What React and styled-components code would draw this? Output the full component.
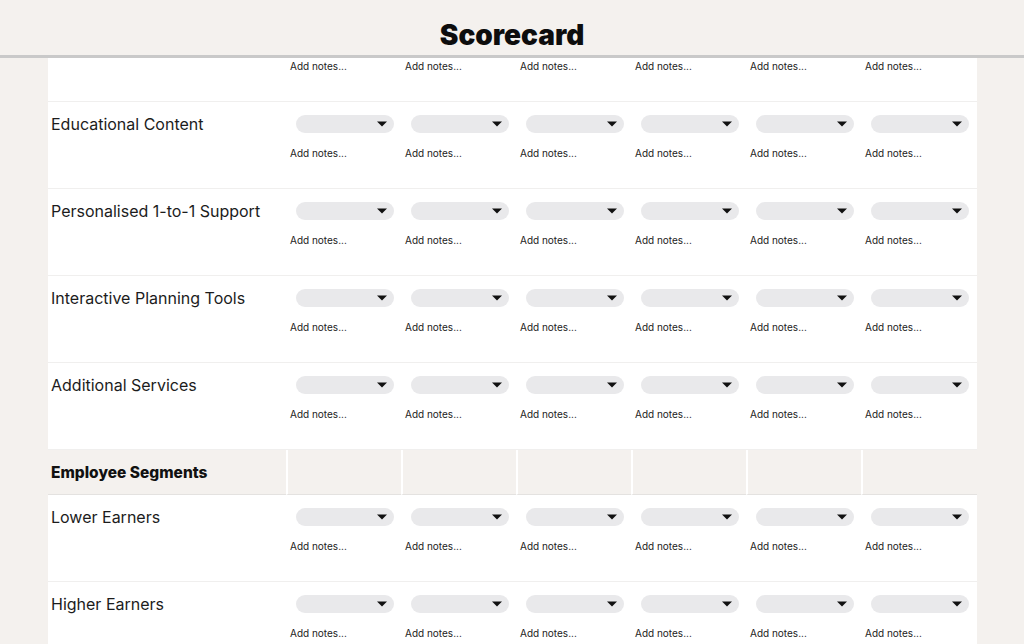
import React from "react";
import styled, { createGlobalStyle } from "styled-components";

const GlobalStyle = createGlobalStyle`
  html, body { margin: 0; padding: 0; }
  body {
    background: #f4f1ee;
    font-family: Inter, "Noto Sans", "Liberation Sans", sans-serif;
    color: #1a1a1a;
  }
`;

const Page = styled.div`
  height: 644px;
  display: flex;
  flex-direction: column;
  overflow: hidden;
`;

const Header = styled.header`
  flex: 0 0 auto;
  height: 55px;
  border-bottom: 3px solid #c9c9c9;
  background: #f4f1ee;
  display: flex;
  align-items: center;
  justify-content: center;
`;

const Title = styled.h1`
  margin: 14px 0 0;
  font-size: 28px;
  font-weight: 900;
  color: #0d0d0d;
  letter-spacing: 0;
`;

const Viewport = styled.div`
  flex: 1 1 auto;
  overflow: hidden;
`;

const Card = styled.div`
  margin: -43px 47px 0 48px;
  background: #fff;
  display: grid;
  grid-template-columns: 239px repeat(6, 115px);
`;

const Row = styled.div`
  display: contents;
`;

const LabelCell = styled.div`
  height: 74px;
  border-bottom: 1px solid #f0efee;
  padding: 12px 0 0 3px;
  font-size: 16px;
  line-height: 20px;
  color: #1c1c1c;
`;

const ScoreCell = styled.div`
  height: 74px;
  padding: 12px 0 0 3px;
  border-bottom: 1px solid #f0efee;
  display: flex;
  flex-direction: column;
  align-items: flex-start;
`;

const Select = styled.div`
  margin: 1px 0 0 6px;
  width: 98px;
  height: 18px;
  border-radius: 9px;
  background: #e9e9eb;
  display: flex;
  align-items: center;
  justify-content: flex-end;
  padding-right: 7px;
  box-sizing: border-box;
`;

const Notes = styled.div`
  margin-top: 14px;
  font-size: 10px;
  line-height: 12px;
  color: #222;
`;

const SectionLabel = styled.div`
  height: 44px;
  background: #f4f1ee;
  border-bottom: 1px solid #e4e2e0;
  padding-left: 3px;
  display: flex;
  align-items: center;
  font-size: 15.5px;
  font-weight: 800;
  color: #111;
`;

const SectionCell = styled.div`
  height: 44px;
  background: #f4f1ee;
  border-bottom: 1px solid #e4e2e0;
  border-left: 2px solid #fff;
  margin-left: -1px;
`;

const Arrow = () => (
  <svg width="10" height="6" viewBox="0 0 10 6" aria-hidden="true">
    <path d="M0 0.5 H10 L5 5.5 Z" fill="#111" />
  </svg>
);

const COLS = 6;

const ItemRow = ({ label }) => (
  <Row>
    <LabelCell>{label}</LabelCell>
    {Array.from({ length: COLS }).map((_, i) => (
      <ScoreCell key={i}>
        <Select>
          <Arrow />
        </Select>
        <Notes>Add notes...</Notes>
      </ScoreCell>
    ))}
  </Row>
);

const SectionRow = ({ label }) => (
  <Row>
    <SectionLabel>{label}</SectionLabel>
    {Array.from({ length: COLS }).map((_, i) => (
      <SectionCell key={i} />
    ))}
  </Row>
);

export default function App() {
  return (
    <>
      <GlobalStyle />
      <Page>
        <Header>
          <Title>Scorecard</Title>
        </Header>
        <Viewport>
          <Card>
            <ItemRow label="Digital Platform" />
            <ItemRow label="Educational Content" />
            <ItemRow label="Personalised 1-to-1 Support" />
            <ItemRow label="Interactive Planning Tools" />
            <ItemRow label="Additional Services" />
            <SectionRow label="Employee Segments" />
            <ItemRow label="Lower Earners" />
            <ItemRow label="Higher Earners" />
            <ItemRow label="Younger Employees" />
          </Card>
        </Viewport>
      </Page>
    </>
  );
}
